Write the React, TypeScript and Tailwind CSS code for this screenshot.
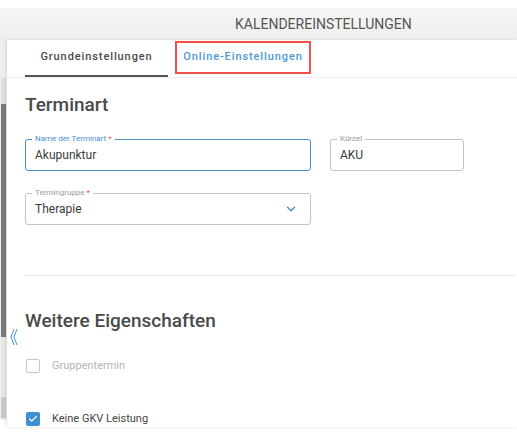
import { ChevronDown, Check } from "lucide-react";

function OutlinedField({
  label,
  value,
  width,
  focused = false,
  required = false,
  select = false,
}: {
  label: string;
  value: string;
  width: string;
  focused?: boolean;
  required?: boolean;
  select?: boolean;
}) {
  return (
    <div
      className={`relative flex h-[32px] items-center rounded-[3px] border px-[9px] ${width} ${
        focused ? "border-[#4a90d0] border-[1.5px]" : "border-[#c4c4c4]"
      }`}
    >
      <span
        className={`absolute -top-[7px] left-[6px] bg-white px-[3px] text-[8px] leading-[12px] ${
          focused ? "text-[#4a90d0]" : "text-[#9a9a9a]"
        }`}
      >
        {label}
        {required && <span className="text-[#e55353]"> *</span>}
      </span>
      <span className="flex-1 text-[12px] text-[#3a3a3a]">{value}</span>
      {select && <ChevronDown className="mr-[3px] h-[14px] w-[14px] text-[#4a90d0]" strokeWidth={2.5} />}
    </div>
  );
}

export default function App() {
  return (
    <div className="h-[446px] w-[517px] overflow-hidden bg-white font-['Roboto',sans-serif]">
      <div className="h-2 bg-white" />
      <header className="flex h-8 items-center bg-gradient-to-b from-[#f5f5f5] to-[#efefef] pl-[235px] text-[14px] text-[#555]">
        KALENDEREINSTELLUNGEN
      </header>

      <div className="flex">
        {/* left strip with scrollbar */}
        <div className="flex h-[380px] w-[7px] flex-col bg-[#efefef]">
          <div className="h-[38px]" />
          <div className="ml-[1px] h-[26px] w-[5px] bg-[#dedede]" />
          <div className="ml-[1px] h-[233px] w-[5px] bg-[#7a7a7a]" />
          <div className="ml-[1px] h-[60px] w-[5px] bg-[#e6e6e6]" />
          <div className="ml-[1px] h-[21px] w-[5px] bg-[#c9c9c9]" />
        </div>

        <main className="relative flex-1 bg-white shadow-[-1px_0_3px_rgba(0,0,0,0.12)]">
          {/* tabs */}
          <nav className="flex h-[38px] items-stretch border-b border-[#eeeeee] pl-[18px]">
            <div className="flex w-[143px] items-center justify-center border-b-2 border-[#555] text-[11px] font-medium tracking-[0.9px] text-[#4a4a4a]">
              Grundeinstellungen
            </div>
            <div className="mb-[3px] ml-[7px] mt-[1px] flex w-[136px] items-center justify-center border-2 border-[#f0524a] text-[11px] font-medium tracking-[0.9px] text-[#4a98d6]">
              Online-Einstellungen
            </div>
          </nav>

          <section className="pl-[18px] pr-[2px]">
            <h2 className="mt-[15px] text-[19px] font-medium leading-[24px] text-[#4a4a4a]">Terminart</h2>

            <div className="mt-[22px] flex gap-[19px]">
              <OutlinedField label="Name der Terminart" value="Akupunktur" width="w-[286px]" focused required />
              <OutlinedField label="Kürzel" value="AKU" width="w-[134px]" />
            </div>

            <div className="mt-[22px]">
              <OutlinedField label="Termingruppe" value="Therapie" width="w-[286px]" required select />
            </div>

            <div className="mt-[50px] h-px bg-[#e2e2e2]" />

            <h2 className="mt-[33px] text-[19px] font-medium leading-[24px] text-[#4a4a4a]">Weitere Eigenschaften</h2>

            <label className="mt-[25px] flex items-center gap-[12px]">
              <span className="ml-[1px] h-[14px] w-[14px] rounded-[2px] border-[1.5px] border-[#c8c8c8]" />
              <span className="text-[11px] text-[#b5b5b5]">Gruppentermin</span>
            </label>

            <label className="mt-[36px] flex items-center gap-[12px]">
              <span className="ml-[1px] flex h-[14px] w-[14px] items-center justify-center rounded-[2px] bg-[#3d8fd6]">
                <Check className="h-[10px] w-[10px] text-white" strokeWidth={3} />
              </span>
              <span className="text-[11px] text-[#444]">Keine GKV Leistung</span>
            </label>
          </section>

          {/* collapse handle */}
          <svg
            className="absolute left-[3px] top-[288px]"
            width="8"
            height="18"
            viewBox="0 0 8 18"
            fill="none"
            stroke="#4a90d0"
            strokeWidth="1"
          >
            <polyline points="4,1 1,9 4,17" />
            <polyline points="7,1 4,9 7,17" />
          </svg>
        </main>
      </div>
    </div>
  );
}
